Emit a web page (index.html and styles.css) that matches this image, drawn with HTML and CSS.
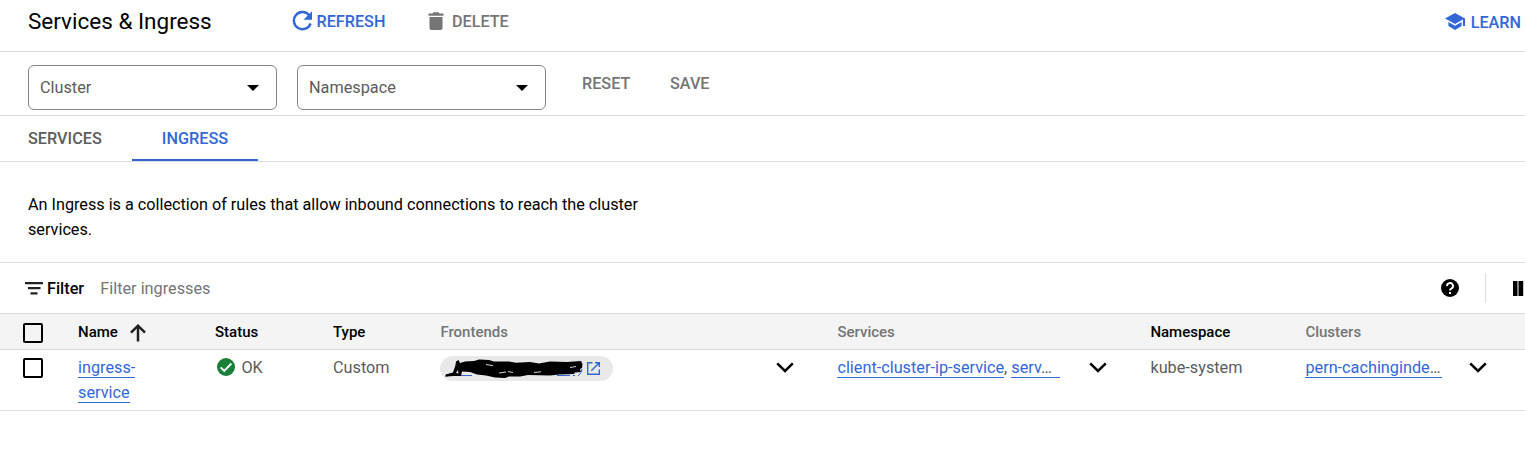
FILE: index.html
```html
<!DOCTYPE html>
<html lang="en">
<head>
<meta charset="utf-8">
<title>Services &amp; Ingress</title>
<link rel="stylesheet" href="styles.css">
</head>
<body>
<header class="topbar">
  <h1 class="title">Services &amp; Ingress</h1>
  <button class="action refresh">
    <svg width="21" height="22" viewBox="0 0 21 22"><path d="M17.300 5.400A8.600 8.600 0 1 0 18.600 13.500" fill="none" stroke="currentColor" stroke-width="2.400"/><path d="M20 1.300v8.500h-8.500z" fill="currentColor"/></svg>
    <span>REFRESH</span>
  </button>
  <button class="action delete">
    <svg width="16" height="18" viewBox="0 0 16 18"><path d="M.5 1.500H4.500L5.500 .3h5l1 1.200h4v2.300H.5zM1.500 5h13v11q0 2-2 2h-9q-2 0-2-2z" fill="currentColor"/></svg>
    <span>DELETE</span>
  </button>
  <button class="action learn">
    <svg width="20" height="18" viewBox="0 0 20 18"><path d="M10 0L0 5.500 10 11l8-4.400V13h2V5.500z" fill="currentColor"/><path d="M3.400 9v4.100L10 17l6.600-3.900V9L10 12.800z" fill="currentColor"/></svg>
    <span>LEARN</span>
  </button>
</header>
<section class="filters">
  <div class="select"><span>Cluster</span><i class="caret"></i></div>
  <div class="select"><span>Namespace</span><i class="caret"></i></div>
  <button class="action reset">RESET</button>
  <button class="action save">SAVE</button>
</section>
<nav class="tabs">
  <a class="tab">SERVICES</a>
  <a class="tab active">INGRESS</a>
</nav>
<p class="description">An Ingress is a collection of rules that allow inbound connections to reach the cluster services.</p>
<section class="filterbar">
  <svg width="18" height="13" viewBox="0 0 18 13"><path d="M0 0h18v2.300H0zM3 5h12.500v2.300H3zM5.500 10.200h7v2.300h-7z" fill="#202124"/></svg>
  <strong>Filter</strong>
  <span class="placeholder">Filter ingresses</span>
  <svg class="help" width="18" height="18" viewBox="0 0 18 18"><circle cx="9" cy="9" r="9" fill="#000"/><path d="M6 7.100a3 2.900 0 1 1 4.600 2.300Q9 10.300 9 11.600" fill="none" stroke="#fff" stroke-width="1.900"/><path d="M8 13h2v2H8z" fill="#fff"/></svg>
  <i class="divider"></i>
  <svg class="columns" width="12" height="15" viewBox="0 0 12 15"><path d="M0 0h4.500v15H0zM5.500 0h4.700v15H5.500z" fill="#000"/></svg>
</section>
<div class="grid head">
  <span class="check"></span>
  <span class="name">Name <svg width="16" height="18" viewBox="0 0 16 18"><path d="M8 17.500V2M1 8.600L8 1.700l7 6.900" fill="none" stroke="#202020" stroke-width="2.500"/></svg></span>
  <span>Status</span>
  <span>Type</span>
  <span class="muted">Frontends</span>
  <span class="muted">Services</span>
  <span>Namespace</span>
  <span class="muted">Clusters</span>
</div>
<div class="grid row">
  <span class="check"></span>
  <span class="cell"><a class="link">ingress-</a><br><a class="link">service</a></span>
  <span class="cell status">
    <svg width="18" height="18" viewBox="0 0 18 18"><circle cx="9" cy="9" r="9" fill="#188038"/><path d="M3.700 9.300l3.500 3.500 7.200-7.300" fill="none" stroke="#fff" stroke-width="1.900"/></svg>
    <span>OK</span>
  </span>
  <span class="cell">Custom</span>
  <span class="expandable frontends">
    <span class="chip">
      <svg class="scribble" width="140" height="20" viewBox="0 0 140 20">
        <path d="M13 16.500h14M112 16.500h13M128 16.500h2M12 12l3 4M137 10q0 4-4 7" fill="none" stroke="#3367d6" stroke-width="1"/>
        <path d="M1 16.500L8 15.300 12 10.500 13 3.500M14 16L16 10" stroke="#000" stroke-width="2.200" fill="none"/>
        <path d="M0 17.500L1 15.500 8 13.500 10.500 6 11 2.500 13.500 1 15 4 20 2.500 29 2 34 .5 44 1 49 2.500 64 2.500 71 3.800 85 3 94 4.500 105 2.500 122 3 136 2 137.500 5 137 9 135 10 136 13 130 13.500 129 15 115 15.500 105 16.500 83 16 75 17.500 64 17.500 60 19 50 18.500 41 16.500 32 15.500 25 13 17 12.500 16 17 9 17z" fill="#000"/>
        <path d="M11 14l2-3 .5 3.500z" fill="#e9e9e9"/>
        <path d="M41 5.500l7 1.200M54 14l7-1M63 12.500l5 1M89 13.500l7-.7M125 8.500l6-1" fill="none" stroke="#e9e9e9" stroke-width=".9"/>
      </svg>
      <svg width="13" height="13" viewBox="0 0 13 13"><path d="M5.500.7H.7v11.600h11.600V7.500M8 .7h4.300V5M12 1L4.300 8.700" fill="none" stroke="#3367d6" stroke-width="1.400"/></svg>
    </span>
    <svg class="chevron" width="18" height="11" viewBox="0 0 18 11"><path d="M1.200 1.400L9 9l7.800-7.600" fill="none" stroke="#000" stroke-width="2.500"/></svg>
  </span>
  <span class="expandable services">
    <span class="cell"><a class="link">client-cluster-ip-service</a>, <a class="link cut">serv<span class="dots">…</span></a></span>
    <svg class="chevron" width="18" height="11" viewBox="0 0 18 11"><path d="M1.200 1.400L9 9l7.800-7.600" fill="none" stroke="#000" stroke-width="2.500"/></svg>
  </span>
  <span class="cell">kube-system</span>
  <span class="expandable clusters">
    <span class="cell"><a class="link cut">pern-cachinginde<span class="dots">…</span></a></span>
    <svg class="chevron" width="18" height="11" viewBox="0 0 18 11"><path d="M1.200 1.400L9 9l7.800-7.600" fill="none" stroke="#000" stroke-width="2.500"/></svg>
  </span>
</div>
</body>
</html>
```
FILE: styles.css
```css
* { box-sizing: border-box; }
body { margin: 0; background: #fff; color: #000; font: 16.25px/25px Roboto, sans-serif; overflow: hidden; }
svg { display: block; flex: none; }
button { border: 0; padding: 0; background: none; }

.topbar { display: flex; align-items: center; height: 52px; padding: 0 4px 9px 28px; border-bottom: 1px solid #dadce0; }
.title { margin: 0; width: 263.500px; font-size: 22.5px; font-weight: 400; line-height: 30px; }
.action { display: flex; align-items: center; font: 500 16.2px/24px Roboto, sans-serif; color: #757575; }
.action span { padding-top: 2px; }
.refresh { width: 136.500px; gap: 4px; color: #3367d6; }
.delete { gap: 8px; }
.learn { margin-left: auto; padding-top: 1px; gap: 5px; color: #3367d6; }
.learn svg { margin-right: 1px; }

.filters { display: flex; align-items: flex-start; height: 64px; padding: 13px 0 0 28px; border-bottom: 1px solid #dadce0; }
.select { display: flex; align-items: center; justify-content: space-between; width: 249px; height: 45px; margin-right: 20px; padding: 0 17.5px 0 11px; border: 1px solid #80868b; border-radius: 6px; color: #5c5c5c; }
.caret { border: 6px solid transparent; border-top-color: #000; border-bottom: 0; }
.reset { margin: 7px 0 0 16px; width: 88px; }
.save { margin-top: 7px; }

.tabs { display: flex; height: 46px; border-bottom: 1px solid #dadce0; }
.tab { height: 45px; padding: 0 30px 0 28px; line-height: 45px; font-weight: 500; color: #5c5c5c; }
.tab.active { padding: 0 30px; border-bottom: 2px solid #3367d6; color: #3367d6; }

.description { margin: 0; height: 101px; padding: 30px 870px 0 28px; border-bottom: 1px solid #dadce0; font-size: 16.22px; }

.filterbar { display: flex; align-items: center; height: 51px; padding-left: 24.5px; border-bottom: 1px solid #dadce0; }
.filterbar strong { margin-left: 4.500px; width: 53.3px; font-weight: 500; }
.placeholder { color: #757575; }
.help { margin-left: auto; }
.divider { width: 1px; height: 30px; margin: 0 27px 0 26px; background: #dadce0; }

.grid { display: grid; grid-template-columns: 78px 137px 118px 107.4px 397px 313px 155px 220px; border-bottom: 1px solid #dadce0; }
.head { height: 36px; align-items: center; background: #f4f4f4; font-size: 15px; font-weight: 500; }
.head > span:not(.check) { padding-top: 2px; }
.name { display: flex; align-items: center; gap: 12px; }
.muted { color: #757575; }
.check { width: 20px; height: 20px; margin-left: 23px; border: 2px solid #000; border-radius: 2px; background: #fff; }
.head .check { margin-top: 3px; background: none; }
.row { height: 61px; color: #5c5c5c; }
.row .check { margin-top: 8px; }
.cell { padding-top: 5px; white-space: nowrap; }
.status { display: flex; align-items: flex-start; gap: 6px; padding-left: 2.4px; }
.status svg { margin-top: 3px; }
.link { display: inline-block; height: 23px; border-bottom: 1px solid #3367d6; color: #3367d6; }
.dots { color: #5c5c5c; }
.expandable { display: flex; align-items: flex-start; justify-content: space-between; }
.chevron { margin-top: 11.5px; }
.frontends { padding-right: 43px; }
.services { padding-right: 43px; }
.clusters { padding-right: 38px; }
.services .cut { width: 49px; }
.clusters .cut { width: 137px; }
.chip { display: flex; align-items: center; justify-content: space-between; width: 173px; height: 25px; margin-top: 6px; padding: 0 13.5px 0 5px; border-radius: 13px; background: #e9e9e9; }
```
